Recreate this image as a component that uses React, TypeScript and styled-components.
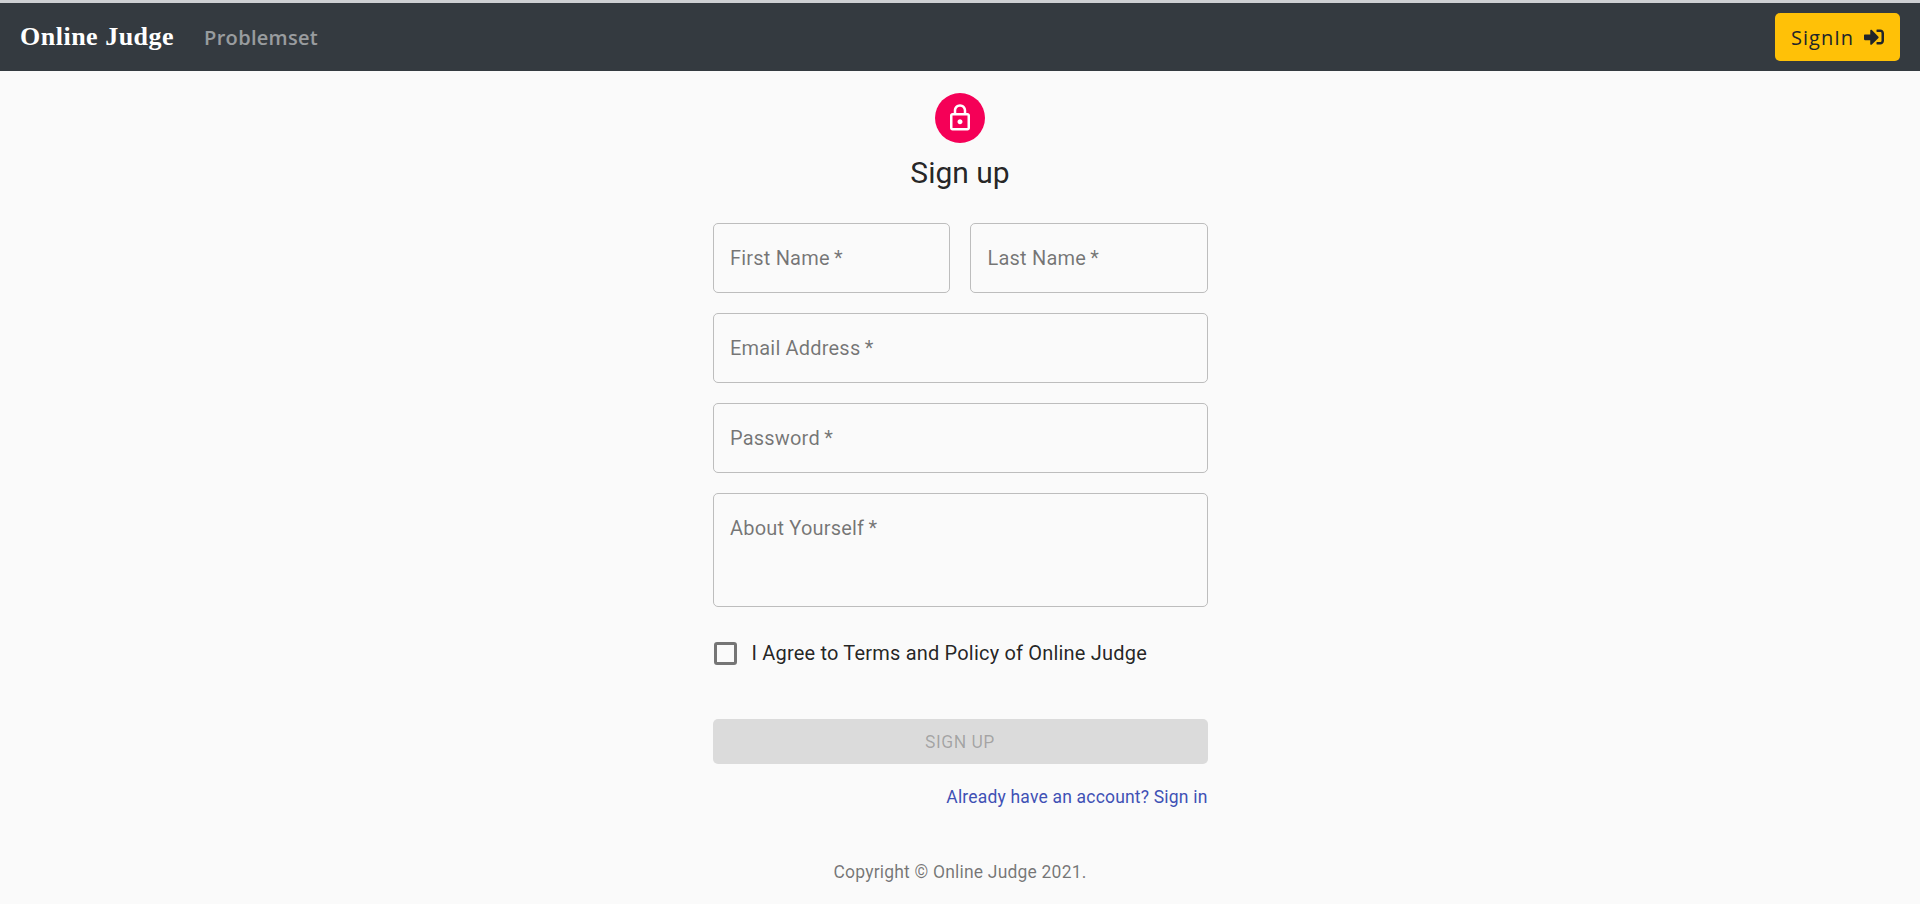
import React from 'react';
import styled, { createGlobalStyle } from 'styled-components';
import { FaSignInAlt } from 'react-icons/fa';

const GlobalStyle = createGlobalStyle`
    html, body {
        margin: 0;
        padding: 0;
        background-color: #fafafa;
        font-family: Roboto, "Liberation Sans", sans-serif;
    }
    * {
        box-sizing: border-box;
    }
`;

const App: React.FC = () => {
    return (
        <>
            <GlobalStyle />
            <TopStrip />
            <Navbar>
                <NavLeft>
                    <Brand>Online Judge</Brand>
                    <NavLink>Problemset</NavLink>
                </NavLeft>
                <SignInButton>
                    SignIn
                    <FaSignInAlt size={20} />
                </SignInButton>
            </Navbar>
            <Main>
                <Avatar>
                    <svg viewBox="0 0 24 24" width="30" height="30" fill="#fff">
                        <path d="M18 8h-1V6c0-2.76-2.24-5-5-5S7 3.24 7 6v2H6c-1.1 0-2 .9-2 2v10c0 1.1.9 2 2 2h12c1.1 0 2-.9 2-2V10c0-1.1-.9-2-2-2zM9 6c0-1.66 1.34-3 3-3s3 1.34 3 3v2H9V6zm9 14H6V10h12v10zm-6-3c1.1 0 2-.9 2-2s-.9-2-2-2-2 .9-2 2 .9 2 2 2z" />
                    </svg>
                </Avatar>
                <Title>Sign up</Title>
                <Fields>
                    <FieldRow>
                        <Field>First Name{'\u2009'}*</Field>
                        <Field>Last Name{'\u2009'}*</Field>
                    </FieldRow>
                    <Field>Email Address{'\u2009'}*</Field>
                    <Field>Password{'\u2009'}*</Field>
                    <Field $multiline>About Yourself{'\u2009'}*</Field>
                </Fields>
                <AgreeRow>
                    <CheckBox />
                    <AgreeText>I Agree to Terms and Policy of Online Judge</AgreeText>
                </AgreeRow>
                <SubmitButton disabled>Sign up</SubmitButton>
                <SignInLink>Already have an account? Sign in</SignInLink>
                <Copyright>Copyright © Online Judge 2021.</Copyright>
            </Main>
        </>
    );
};

export default App;

const TopStrip = styled.div`
    height: 3px;
    background-color: #ced0d3;
`;

const Navbar = styled.nav`
    height: 68px;
    padding: 0 20px;
    background-color: #343a40;
    display: flex;
    align-items: center;
    justify-content: space-between;
`;

const NavLeft = styled.div`
    display: flex;
    align-items: center;
    gap: 30px;
`;

const Brand = styled.span`
    font-family: "Liberation Serif", serif;
    font-weight: 700;
    font-size: 26px;
    letter-spacing: 0.5px;
    color: #fff;
`;

const NavLink = styled.span`
    font-family: "Open Sans", sans-serif;
    font-weight: 600;
    font-size: 20px;
    letter-spacing: 0.3px;
    color: rgba(255, 255, 255, 0.5);
`;

const SignInButton = styled.button`
    width: 125px;
    height: 48px;
    border: none;
    border-radius: 5px;
    background-color: #ffc107;
    color: #212529;
    font-family: "Open Sans", sans-serif;
    font-size: 20px;
    letter-spacing: 1px;
    display: flex;
    align-items: center;
    justify-content: center;
    gap: 10px;
`;

const Main = styled.main`
    width: 495px;
    margin: 0 auto;
    display: flex;
    flex-direction: column;
    align-items: center;
    padding-top: 22px;
`;

const Avatar = styled.div`
    width: 50px;
    height: 50px;
    border-radius: 50%;
    background-color: #f50057;
    display: flex;
    align-items: center;
    justify-content: center;
`;

const Title = styled.h1`
    margin: 10px 0 0;
    font-size: 30px;
    font-weight: 400;
    line-height: 40px;
    color: rgba(0, 0, 0, 0.87);
`;

const Fields = styled.div`
    width: 100%;
    margin-top: 30px;
    display: flex;
    flex-direction: column;
    gap: 20px;
`;

const FieldRow = styled.div`
    display: grid;
    grid-template-columns: 1fr 1fr;
    gap: 20px;
`;

const Field = styled.div<{ $multiline?: boolean }>`
    height: ${(p) => (p.$multiline ? '114px' : '70px')};
    padding: ${(p) => (p.$multiline ? '22px 16.5px' : '0 16.5px')};
    border: 1px solid #bdbdbd;
    border-radius: 5px;
    display: flex;
    align-items: ${(p) => (p.$multiline ? 'flex-start' : 'center')};
    font-size: 20px;
    line-height: 24px;
    letter-spacing: 0.19px;
    color: rgba(0, 0, 0, 0.54);
`;

const AgreeRow = styled.label`
    width: 100%;
    margin-top: 34px;
    display: flex;
    align-items: center;
    gap: 15px;
`;

const CheckBox = styled.span`
    width: 23px;
    height: 23px;
    margin-left: 1px;
    border: 3px solid #757575;
    border-radius: 3px;
`;

const AgreeText = styled.span`
    font-size: 20px;
    letter-spacing: 0.19px;
    color: rgba(0, 0, 0, 0.87);
`;

const SubmitButton = styled.button`
    width: 100%;
    height: 45px;
    margin-top: 54px;
    border: none;
    border-radius: 5px;
    background-color: rgba(0, 0, 0, 0.12);
    color: rgba(0, 0, 0, 0.26);
    font-family: Roboto, sans-serif;
    font-size: 17.5px;
    text-transform: uppercase;
    letter-spacing: 0.5px;
`;

const SignInLink = styled.a`
    align-self: flex-end;
    margin-top: 21px;
    font-size: 17.5px;
    line-height: 25px;
    letter-spacing: 0.19px;
    color: #3f51b5;
`;

const Copyright = styled.p`
    margin: 50px 0 0;
    font-size: 17.5px;
    line-height: 25px;
    letter-spacing: 0.19px;
    color: rgba(0, 0, 0, 0.54);
`;
